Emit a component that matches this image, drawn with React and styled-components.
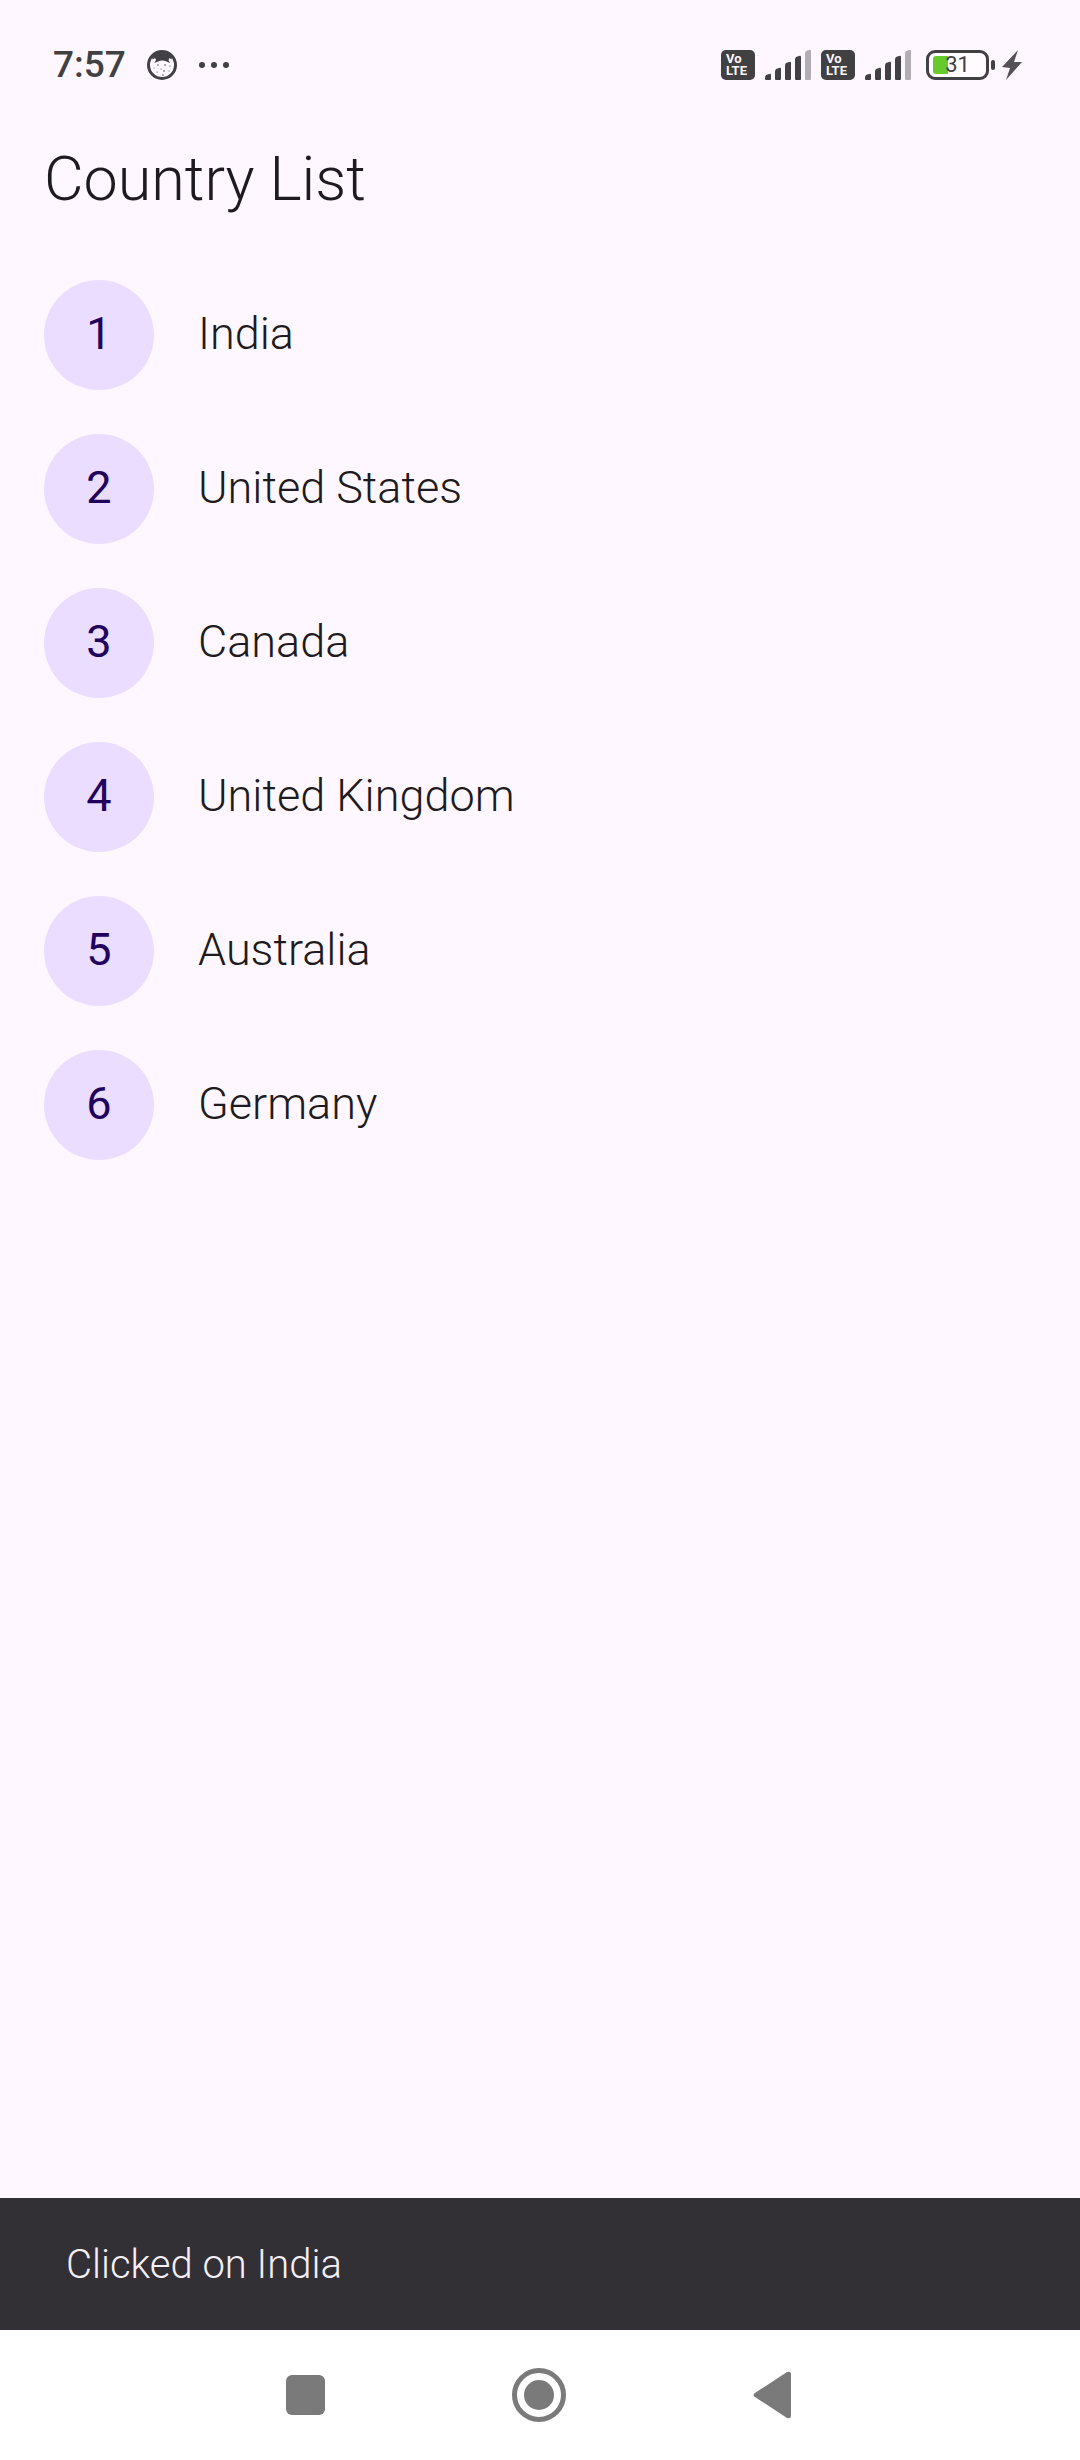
import React, { useState } from "react";
import styled, { createGlobalStyle } from "styled-components";

const ink = "#414042";

const GlobalStyle = createGlobalStyle`
  * { box-sizing: border-box; }
  body {
    margin: 0;
    background: #fef7ff;
    font-family: Roboto, "Liberation Sans", sans-serif;
  }
`;

const Screen = styled.div`
  display: flex;
  flex-direction: column;
  min-height: 100vh;
  background: #fef7ff;
  color: #1d1b20;
`;

const StatusBar = styled.div`
  display: flex;
  align-items: center;
  justify-content: space-between;
  height: 90px;
  padding: 40px 58px 0 53px;
  color: ${ink};
`;

const StatusGroup = styled.div`
  display: flex;
  align-items: center;
  gap: ${(p) => p.$gap}px;
`;

const Clock = styled.time`
  font-size: 37px;
  line-height: 48px;
  font-weight: 500;
`;

const Glyph = styled.svg`
  display: block;
  flex: none;
`;

const VolteBadge = styled.span`
  display: flex;
  flex-direction: column;
  justify-content: center;
  width: 34px;
  height: 30px;
  padding-left: 5px;
  border-radius: 5px;
  background: ${ink};
  color: #fef7ff;
  font-size: 13px;
  line-height: 12px;
  font-weight: 700;
`;

const BatteryGroup = styled.div`
  display: flex;
  align-items: center;
  gap: 2px;
  margin: 0 -2px 0 5px;
`;

const BatteryShell = styled.div`
  display: grid;
  align-items: center;
  width: 63px;
  height: 30px;
  padding: 0 4px;
  border: 3px solid ${ink};
  border-radius: 9px;
  background: #fffbff;
`;

const BatteryFill = styled.span`
  grid-area: 1 / 1;
  width: 31%;
  height: 18px;
  border-radius: 3px 0 0 3px;
  background: #66c92c;
`;

const BatteryLevel = styled.span`
  grid-area: 1 / 1;
  text-align: center;
  font-size: 22px;
  line-height: 24px;
`;

const BatteryTip = styled.span`
  width: 4px;
  height: 10px;
  border-radius: 2px;
  background: ${ink};
`;

const AppBar = styled.header`
  display: flex;
  align-items: center;
  height: 178px;
  padding: 0 44px;
`;

const Title = styled.h1`
  margin: 0;
  font-size: 61px;
  line-height: 76px;
  font-weight: 300;
`;

const CountryList = styled.ul`
  flex: 1;
  margin: 0;
  padding: 0;
  list-style: none;
`;

const CountryRow = styled.button`
  display: flex;
  align-items: center;
  gap: 44px;
  width: 100%;
  height: 154px;
  padding: 12px 44px 32px;
  border: 0;
  background: none;
  color: inherit;
  font-family: inherit;
  font-size: 45px;
  line-height: 66px;
  text-align: left;
  cursor: pointer;
`;

const Avatar = styled.span`
  display: flex;
  align-items: center;
  justify-content: center;
  flex: none;
  width: 110px;
  height: 110px;
  padding-bottom: 2px;
  border-radius: 50%;
  background: #eaddff;
  color: #21005d;
`;

const CountryName = styled.span`
  padding-bottom: 2px;
  font-weight: 300;
`;

const Snackbar = styled.output`
  display: flex;
  align-items: center;
  height: 132px;
  padding: 2px 66px 0;
  background: #322f35;
  color: #f5eff7;
  font-size: 40px;
  line-height: 56px;
  font-weight: 300;
`;

const NavBar = styled.nav`
  display: flex;
  align-items: center;
  justify-content: center;
  gap: 124px;
  height: 130px;
  background: #fff;
`;

const NavButton = styled.button`
  display: flex;
  align-items: center;
  justify-content: center;
  width: 110px;
  height: 110px;
  padding: 0;
  border: 0;
  background: none;
  color: #7a7a7a;
`;

const CatFace = () => (
  <Glyph width="30" height="30" viewBox="0 0 30 30" aria-hidden="true">
    <circle cx="15" cy="15" r="13.5" fill="#fef7ff" stroke={ink} strokeWidth="3" />
    <path d="M5 7 Q10 1.5 15 1.5 Q20 1.5 25 7 L24.5 9.5 L22.5 8 L21.5 10 L23 13 L19.5 11.5 Q15 9.5 11 11.5 L7.5 13 L9 10 L8 8 L5.5 9.5 Z" fill={ink} />
    <g fill={ink}>
      <circle cx="11" cy="15" r="0.7" />
      <circle cx="18" cy="15" r="0.8" />
      <circle cx="23" cy="16" r="0.6" />
      <circle cx="7" cy="18" r="0.5" />
      <circle cx="14" cy="19" r="0.5" />
      <circle cx="17" cy="21" r="0.8" />
      <circle cx="10" cy="22" r="0.6" />
      <circle cx="22" cy="21" r="0.5" />
      <circle cx="16" cy="25" r="0.7" />
    </g>
  </Glyph>
);

const MoreDots = () => (
  <Glyph width="32" height="8" viewBox="0 0 32 8" fill={ink} aria-hidden="true">
    <circle cx="4" cy="4" r="3" />
    <circle cx="16" cy="4" r="3" />
    <circle cx="28" cy="4" r="3" />
  </Glyph>
);

const bars = [24, 18, 12, 6, 0];

const Signal = () => (
  <Glyph width="48" height="32" viewBox="0 0 48 32" aria-label="Signal" role="img">
    {bars.map((top, i) => (
      <path
        key={top}
        transform={`translate(${i * 10} 0)`}
        d={`M1 ${top + 5} Q1 ${top + 3} 2 ${top + 2} L5 ${top + 1} Q7 ${top} 7 ${top + 2} V30 Q7 31 6 31 H2 Q1 31 1 30 Z`}
        fill={i === 4 ? "#b3adb4" : ink}
      />
    ))}
  </Glyph>
);

const Bolt = () => (
  <Glyph width="20" height="30" viewBox="0 0 20 30" fill="#555256" aria-hidden="true">
    <path d="M16 0 L0 17 L8 18 L4 30 L20 12 L12 12 Z" />
  </Glyph>
);

const Volte = () => (
  <VolteBadge>
    <span>Vo</span>
    <span>LTE</span>
  </VolteBadge>
);

const countries = ["India", "United States", "Canada", "United Kingdom", "Australia", "Germany"];

export default function App() {
  const [clicked, setClicked] = useState(countries[0]);

  return (
    <Screen>
      <GlobalStyle />
      <StatusBar>
        <StatusGroup $gap={21}>
          <Clock>7:57</Clock>
          <CatFace />
          <MoreDots />
        </StatusGroup>
        <StatusGroup $gap={9}>
          <Volte />
          <Signal />
          <Volte />
          <Signal />
          <BatteryGroup>
            <BatteryShell>
              <BatteryFill />
              <BatteryLevel>31</BatteryLevel>
            </BatteryShell>
            <BatteryTip />
          </BatteryGroup>
          <Bolt />
        </StatusGroup>
      </StatusBar>
      <AppBar>
        <Title>Country List</Title>
      </AppBar>
      <CountryList>
        {countries.map((name, index) => (
          <li key={name}>
            <CountryRow type="button" onClick={() => setClicked(name)}>
              <Avatar>{index + 1}</Avatar>
              <CountryName>{name}</CountryName>
            </CountryRow>
          </li>
        ))}
      </CountryList>
      <Snackbar>Clicked on {clicked}</Snackbar>
      <NavBar>
        <NavButton type="button" aria-label="Recent apps">
          <Glyph width="56" height="56" viewBox="0 0 56 56" fill="currentColor">
            <rect x="8" y="8" width="39" height="40" rx="6" />
          </Glyph>
        </NavButton>
        <NavButton type="button" aria-label="Home">
          <Glyph width="56" height="56" viewBox="0 0 56 56" fill="currentColor">
            <circle cx="27" cy="28" r="24.5" fill="none" stroke="currentColor" strokeWidth="5" />
            <circle cx="27" cy="28" r="15" />
          </Glyph>
        </NavButton>
        <NavButton type="button" aria-label="Back">
          <Glyph width="56" height="56" viewBox="0 0 56 56" fill="currentColor">
            <path d="M9 26 L41 5 Q45 4 45 7 V49 Q45 52 41 51 L9 30 Q6 28 9 26 Z" />
          </Glyph>
        </NavButton>
      </NavBar>
    </Screen>
  );
}
